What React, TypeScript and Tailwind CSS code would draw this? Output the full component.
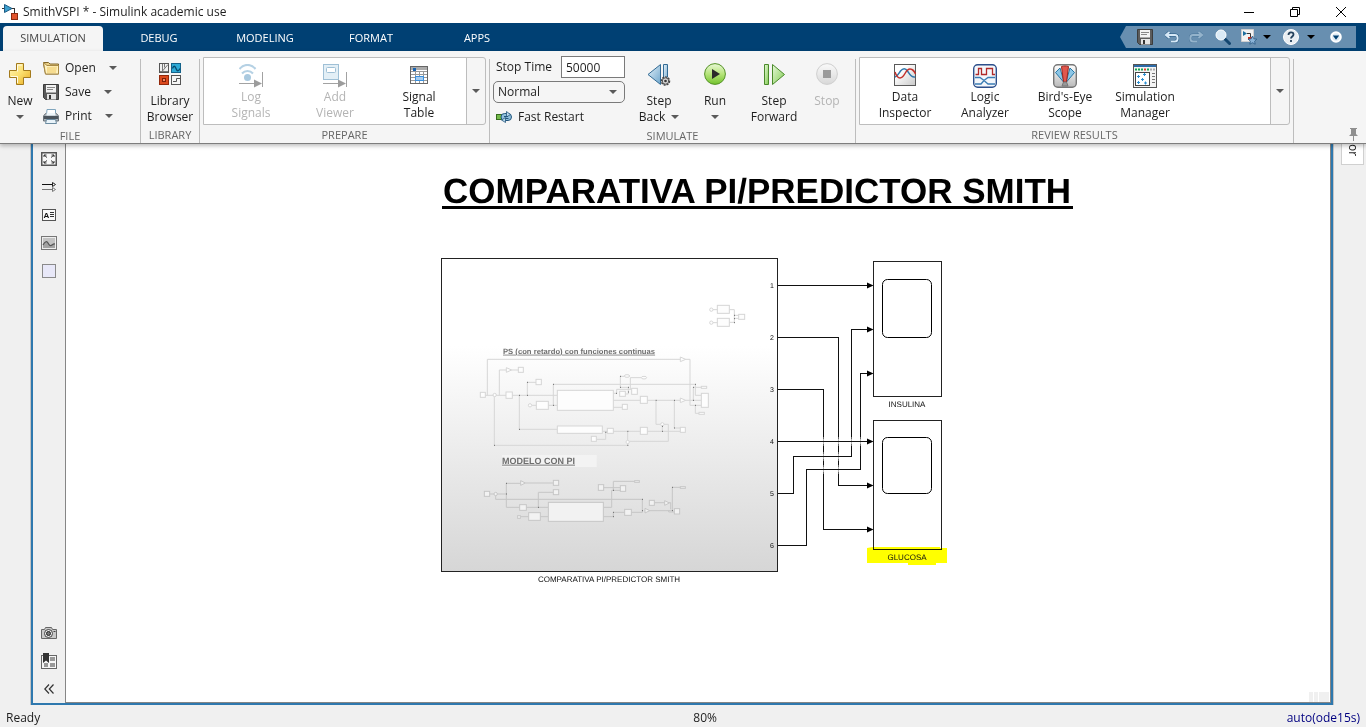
import React from "react";

type IconProps = { className?: string };

function Caret({ className = "" }: IconProps) {
  return (
    <svg width="8" height="4" viewBox="0 0 8 4" className={`shrink-0 ${className}`}>
      <path d="M0 0h8L4 4z" fill="#5a5a5a" />
    </svg>
  );
}

function AppIcon() {
  return (
    <svg width="16" height="16" viewBox="0 0 16 16">
      <path d="M0 4.500h3M9 4.500h3.500v4" fill="none" stroke="#333" />
      <path d="M2.500.500l7.500 4-7.500 4z" fill="#3c9fce" stroke="#1c5b84" />
      <path d="M12.500 4v5" stroke="#333" />
      <rect x="9.500" y="9.500" width="6" height="6" fill="#e2542c" stroke="#8a2a10" />
    </svg>
  );
}

function NewIcon() {
  return (
    <svg width="22" height="22" viewBox="0 0 22 22">
      <defs>
        <linearGradient id="plus" x1="0" y1="0" x2="1" y2="1">
          <stop offset="0" stopColor="#fff6bf" />
          <stop offset=".5" stopColor="#fbdf6d" />
          <stop offset="1" stopColor="#e6a81f" />
        </linearGradient>
      </defs>
      <path d="M7.500.500h7v7h7v7h-7v7h-7v-7h-7v-7h7z" fill="url(#plus)" stroke="#a37a1c" strokeLinejoin="round" />
      <path d="M8.500 20V13.500H2M8.500 8.500V2h4.500" fill="none" stroke="#fffbe4" />
    </svg>
  );
}

function OpenIcon() {
  return (
    <svg width="16" height="14" viewBox="0 0 16 14">
      <path d="M.5 1.500h5l1.500 1.500h8.500v10H2.500L.5 3z" fill="#e9cf86" stroke="#82672a" />
      <path d="M.5 1.500L4 4.500h11.500v8.500H2.500z" fill="#fff2c0" stroke="#a98a45" />
      <path d="M4 6l10-.5-1 6.500H4z" fill="#f6dc90" />
    </svg>
  );
}

function SaveIcon() {
  return (
    <svg width="16" height="16" viewBox="0 0 16 16">
      <path d="M.5.5h15v15h-13l-2-2z" fill="#5b5b5b" stroke="#3b3b3b" />
      <path d="M3 1h10v7H3z" fill="#f2f2f2" />
      <path d="M4 3.500h8M4 5.500h6" stroke="#888" />
      <path d="M4 10h9v5.500H4z" fill="#e4e4e4" />
      <path d="M6 11h2v4H6z" fill="#333" />
      <path d="M3 8.500h10" stroke="#aaa" />
    </svg>
  );
}

function PrintIcon() {
  return (
    <svg width="16" height="15" viewBox="0 0 16 15">
      <path d="M4 .5h8.500V6h-9z" fill="#fff" stroke="#7fa5bd" />
      <path d="M2.500 4.500h11l2 2.500v5H.5V7z" fill="#a9b2ba" stroke="#6a7278" />
      <path d="M1 7h14v3H1z" fill="#4b545c" />
      <path d="M3.500 4h9v2.500h-9z" fill="#eef6fa" />
      <path d="M3.500 10.500h9l1 4h-11z" fill="#e9f3f9" stroke="#6b8ba0" />
    </svg>
  );
}

function LibraryIcon() {
  return (
    <svg width="22" height="22" viewBox="0 0 22 22">
      <rect x=".5" y=".5" width="9" height="9" fill="#efefef" stroke="#555" />
      <path d="M3.500 1v7L9 1.500M5.500 1v3.500M1 8.500h8" fill="none" stroke="#777" />
      <rect x="12.500" y=".5" width="9" height="9" fill="#2eaad6" stroke="#14628a" />
      <path d="M13.500 5.500c1-3 2.500-3 3.500 0s2.500 3 4 0" fill="none" stroke="#07496c" strokeWidth="1.300" />
      <rect x=".5" y="12.500" width="9" height="9" fill="#dc4a1e" stroke="#93290c" />
      <rect x="3.500" y="15.500" width="3" height="3" fill="#f58a62" stroke="#7d200a" />
      <rect x="12.500" y="12.500" width="9" height="9" fill="#f5f5f5" stroke="#555" />
      <path d="M14 18.500h3.500v-3H21" fill="none" stroke="#555" />
    </svg>
  );
}

function LogSignalsIcon() {
  return (
    <svg width="24" height="24" viewBox="0 0 24 24">
      <path d="M0 19.500h17M23.500 8v15" stroke="#a2a2a2" />
      <path d="M15 15.500l8 4-8 4z" fill="#9c9c9c" />
      <circle cx="8.500" cy="13.500" r="3.500" fill="#a9c9df" />
      <path d="M3 9.500c3-3.500 8-3.500 11 0M.5 5C5-.5 12-.5 16.500 5" fill="none" stroke="#b5d1e4" strokeWidth="2" />
    </svg>
  );
}

function AddViewerIcon() {
  return (
    <svg width="24" height="24" viewBox="0 0 24 24">
      <path d="M0 19.500h17M23.500 8v15" stroke="#a2a2a2" />
      <path d="M15 15.500l8 4-8 4z" fill="#9c9c9c" />
      <rect x=".5" y=".5" width="15" height="15" fill="#e3eff6" stroke="#9fc0d6" />
      <rect x="3.500" y="3.500" width="9" height="5" rx="1" fill="#fff" stroke="#9fc0d6" />
    </svg>
  );
}

function SignalTableIcon() {
  return (
    <svg width="18" height="18" viewBox="0 0 18 18">
      <rect x=".5" y=".5" width="17" height="17" fill="#fff" stroke="#666" />
      <path d="M1 1h16v3H1z" fill="#ababab" />
      <path d="M3 2h3v3H3z" fill="#1764b4" />
      <path d="M1 5.500h16M1 8.500h16M1 11.500h16M1 14.500h16M5.500 5v12M13.500 5v12M9.500 5v12" stroke="#999" />
      <rect x="5.500" y="10.500" width="8" height="4" fill="#a7cdf0" stroke="#3b90dd" />
    </svg>
  );
}

function FastRestartIcon() {
  return (
    <svg width="16" height="12" viewBox="0 0 16 12">
      <rect x=".5" y="3.500" width="5" height="5" fill="#74bb4a" stroke="#356c1d" />
      <rect x="5" y="2.500" width="10.500" height="7" rx="3.500" fill="#8fbfdd" stroke="#24567c" />
      <path d="M10.500.500l4 3-4 2.500zM9.500 6.500v5l-4-2.500z" fill="#b9d9ec" stroke="#24567c" strokeWidth=".8" />
      <path d="M8 5.500h4M9.500 7.500h3" stroke="#24567c" />
    </svg>
  );
}

function StepBackIcon() {
  return (
    <svg width="24" height="24" viewBox="0 0 24 24">
      <defs>
        <linearGradient id="stepBack" x1="0" y1="0" x2="1" y2="1">
          <stop offset="0" stopColor="#e6f2fa" />
          <stop offset="1" stopColor="#6ea6cc" />
        </linearGradient>
      </defs>
      <path d="M13.500 1.500v20L1 11.500z" fill="url(#stepBack)" stroke="#336b94" />
      <path d="M16.500 1.500h4v20h-4z" fill="url(#stepBack)" stroke="#336b94" />
      <circle cx="18.500" cy="18" r="4" fill="#ddd" stroke="#444" strokeWidth="1.500" strokeDasharray="2 1" />
      <circle cx="18.500" cy="18" r="3.200" fill="#d8d8d8" stroke="#555" />
      <circle cx="18.500" cy="18" r="1.300" fill="#333" />
    </svg>
  );
}

function RunIcon() {
  return (
    <svg width="22" height="22" viewBox="0 0 22 22">
      <defs>
        <linearGradient id="run" x1="0" y1="0" x2="0" y2="1">
          <stop offset="0" stopColor="#e9f8d6" />
          <stop offset=".5" stopColor="#b6e47a" />
          <stop offset="1" stopColor="#72c32c" />
        </linearGradient>
      </defs>
      <circle cx="11" cy="11" r="10.400" fill="url(#run)" stroke="#559327" />
      <path d="M8 6v10l8-5z" fill="#2a2a2a" />
    </svg>
  );
}

function StepForwardIcon() {
  return (
    <svg width="22" height="22" viewBox="0 0 22 22">
      <defs>
        <linearGradient id="stepForward" x1="0" y1="0" x2="1" y2="1">
          <stop offset="0" stopColor="#e5f7d8" />
          <stop offset="1" stopColor="#83cc52" />
        </linearGradient>
      </defs>
      <path d="M1.500 1.500h4v20h-4z" fill="url(#stepForward)" stroke="#4a8a2a" />
      <path d="M9.500 1.500v20l12-10z" fill="url(#stepForward)" stroke="#4a8a2a" />
    </svg>
  );
}

function StopIcon() {
  return (
    <svg width="22" height="22" viewBox="0 0 22 22">
      <defs>
        <linearGradient id="stop" x1="0" y1="0" x2="0" y2="1">
          <stop offset="0" stopColor="#fafafa" />
          <stop offset="1" stopColor="#d8d8d8" />
        </linearGradient>
      </defs>
      <circle cx="11" cy="11" r="10.400" fill="url(#stop)" stroke="#cfcfcf" />
      <path d="M7 7h8v8H7z" fill="#9b9b9b" />
    </svg>
  );
}

function DataInspectorIcon() {
  return (
    <svg width="22" height="22" viewBox="0 0 22 22">
      <defs>
        <linearGradient id="inspector" x1="0" y1="0" x2="1" y2="1">
          <stop offset=".3" stopColor="#fff" />
          <stop offset="1" stopColor="#c9c9c9" />
        </linearGradient>
      </defs>
      <rect x=".5" y=".5" width="21" height="21" fill="url(#inspector)" stroke="#5a5a5a" />
      <path d="M1 13c3-1 4-4 5.500-6 2.500-3 5-3 7 0 2 3 4 7 7.500 6" fill="none" stroke="#2f77ad" strokeWidth="1.500" />
      <path d="M1 8c1 3 2 6 5 6 5 0 5-9 10-9 3 0 4 2 5.500 5" fill="none" stroke="#c4302b" strokeWidth="1.500" />
    </svg>
  );
}

function LogicAnalyzerIcon() {
  return (
    <svg width="24" height="24" viewBox="0 0 24 24">
      <rect x=".7" y=".7" width="22.600" height="22.600" rx="4" fill="#f4f7fb" stroke="#2c4f8b" strokeWidth="1.400" />
      <path d="M2.500 10.500h3v-6h3v6h5v-6h6v6h2.500" fill="none" stroke="#b02a2a" strokeWidth="1.300" />
      <path d="M2 13.500h5l4 3 4 3.500h7M2 20h6l3-3.500 4-3h7" fill="none" stroke="#3a7cb4" strokeWidth="1.300" />
    </svg>
  );
}

function BirdsEyeIcon() {
  return (
    <svg width="24" height="24" viewBox="0 0 24 24">
      <defs>
        <linearGradient id="birdsEye" x1="0" y1="0" x2="0" y2="1">
          <stop offset="0" stopColor="#fff" />
          <stop offset="1" stopColor="#b9b9b9" />
        </linearGradient>
      </defs>
      <rect x=".7" y=".7" width="22.600" height="22.600" rx="4" fill="url(#birdsEye)" stroke="#777" strokeWidth="1.400" />
      <path d="M10.500 18L2.500 8.500 7 4M13.500 18l8-9.500L17 4" fill="#8cc6e6" stroke="#2878a5" />
      <path d="M7 4l4 14M17 4l-4 14" stroke="#2878a5" />
      <path d="M8.500 2.500c2-.7 5-.7 7 0L13.500 18h-3z" fill="#e0574d" stroke="#9c241d" />
      <path d="M9 22l1.500-4h3l1.500 4z" fill="#9a9a9a" stroke="#777" />
    </svg>
  );
}

function SimManagerIcon() {
  return (
    <svg width="24" height="24" viewBox="0 0 24 24">
      <rect x=".5" y=".5" width="23" height="23" fill="#f4f4f4" stroke="#555" />
      <path d="M1 1h22v2H1z" fill="#2d6ba8" />
      <path d="M2 4.500h2v2H2zM5 4.500h2v2H5zM8 4.500h2v2H8zM14 4.500h2v2h-2z" fill="#14a44d" />
      <path d="M11 4.500h2v2h-2z" fill="#e23b2f" />
      <path d="M17 4.500h2v2h-2zM20 4.500h2v2h-2z" fill="#aaa" />
      <rect x="2.500" y="8.500" width="14" height="13" fill="#fff" stroke="#444" />
      <path d="M4 12.500h3M5.500 11v3M10 10.500h3M11.500 9v3M8 15.500h3M9.500 14v3M4 18.500h3M5.500 17v3M11 19h3M12.500 17.500v3" stroke="#2c8fd1" />
      <path d="M19 9.500h3M19 12.500h3M19 15.500h3M19 18.500h3" stroke="#777" />
    </svg>
  );
}

function PinIcon() {
  return (
    <svg width="9" height="13" viewBox="0 0 9 13">
      <path d="M1 0h7v1H7v5l2 2H0l2-2V1H1zM4 8h1v5H4z" fill="#8f8f8f" />
    </svg>
  );
}

function UndoIcon({ className = "" }: IconProps) {
  return (
    <svg width="14" height="12" viewBox="0 0 14 12" className={className}>
      <path d="M4.500 1L1 4l3.500 3M1.500 4H10c3.500 0 3.500 6.500 0 6.500H6" fill="none" stroke="#22567f" strokeWidth="3" />
      <path d="M4.500 1L1 4l3.500 3M1.500 4H10c3.500 0 3.500 6.500 0 6.500H6" fill="none" stroke="#d6e8f6" strokeWidth="2" />
    </svg>
  );
}

function SearchIcon() {
  return (
    <svg width="16" height="16" viewBox="0 0 16 16">
      <path d="M9.500 9.500l5 5" stroke="#14466f" strokeWidth="3" strokeLinecap="round" />
      <circle cx="6" cy="6" r="5" fill="#dbeaf5" stroke="#fff" />
    </svg>
  );
}

function FavoriteIcon() {
  return (
    <svg width="16" height="16" viewBox="0 0 16 16">
      <path d="M.5.5h12v12H.5z" fill="#f3f3f3" stroke="#cfcfcf" />
      <path d="M2 2l4 2.500L2 7z" fill="#1d6f9f" />
      <path d="M6 4.500h3.500V8" fill="none" stroke="#333" />
      <path d="M7 8h4v3H7z" fill="#cf2f1c" />
      <path d="M11.500 7l1.300 2.800 3 .4-2.200 2 .6 3-2.700-1.500-2.700 1.500.6-3-2.200-2 3-.4z" fill="#8ab4d8" stroke="#2d5c85" strokeWidth=".8" />
    </svg>
  );
}

function HelpIcon() {
  return (
    <svg width="16" height="16" viewBox="0 0 16 16">
      <circle cx="8" cy="8" r="7.500" fill="#e9eef2" stroke="#fff" />
      <path d="M5.500 6c0-3.500 5-3.500 5-.500 0 2-2.500 2-2.500 4M8 11v2" fill="none" stroke="#24415c" strokeWidth="1.800" />
    </svg>
  );
}

function MoreIcon() {
  return (
    <svg width="12" height="12" viewBox="0 0 12 12">
      <circle cx="6" cy="6" r="4.800" fill="#dfeaf3" stroke="#fff" strokeWidth="2" />
      <path d="M2.800 4.500h6.400L6 8.800z" fill="#004073" />
    </svg>
  );
}

type PaletteItem = { name: string; icon: React.ReactNode };

const paletteTop: PaletteItem[] = [
  {
    name: "Fit to view",
    icon: (
      <svg width="16" height="14" viewBox="0 0 16 14">
        <rect x=".75" y=".75" width="14.500" height="12.500" fill="#f7f7f7" stroke="#555" strokeWidth="1.500" />
        <path d="M3 5V3h2.500M10.500 3H13v2M13 9v2h-2.500M5.500 11H3V9M3 3l3 2.500M13 3l-3 2.500M13 11l-3-2.500M3 11l3-2.500" fill="none" stroke="#333" />
      </svg>
    ),
  },
  {
    name: "Sample time display",
    icon: (
      <svg width="14" height="10" viewBox="0 0 14 10">
        <path d="M0 2.500h11" stroke="#111" />
        <path d="M0 7.500h11" stroke="#777" />
        <path d="M10.500.500l3 2-3 2z" fill="#fff" stroke="#222" />
        <path d="M10.500 5.500l3 2-3 2z" fill="#fff" stroke="#777" />
      </svg>
    ),
  },
  {
    name: "Annotation",
    icon: (
      <svg width="14" height="12" viewBox="0 0 14 12">
        <rect x=".5" y=".5" width="13" height="11" fill="#fafafa" stroke="#555" />
        <text x="1.500" y="9" fontSize="8" fontWeight="700" fontFamily="Liberation Sans, sans-serif" fill="#111">A</text>
        <path d="M8 3.500h4M8 5.500h4M8 7.500h4" stroke="#333" />
      </svg>
    ),
  },
  {
    name: "Image",
    icon: (
      <svg width="16" height="14" viewBox="0 0 16 14">
        <rect x=".5" y=".5" width="15" height="13" fill="#eee" stroke="#777" />
        <rect x="2" y="2" width="12" height="10" fill="#c3c3c3" />
        <path d="M2 9c2-4 4-4 5-2s2 4 4 2 2-1 3-1v4H2z" fill="#a3a3a3" />
        <path d="M2 9c2-4 4-4 5-2s2 3.500 4 2 2-1 3-1" fill="none" stroke="#555" strokeWidth="1.200" />
      </svg>
    ),
  },
  {
    name: "Area",
    icon: (
      <svg width="14" height="14" viewBox="0 0 14 14">
        <rect x=".5" y=".5" width="13" height="13" fill="#e8e8f8" stroke="#8a8a8a" />
      </svg>
    ),
  },
];

const paletteBottom: PaletteItem[] = [
  {
    name: "Screenshot",
    icon: (
      <svg width="16" height="12" viewBox="0 0 16 12">
        <path d="M.5 2.500h3l1-2h6l1 2h4v9H.5z" fill="#c9c9c9" stroke="#666" />
        <circle cx="7.500" cy="6.500" r="4" fill="#eee" stroke="#444" />
        <circle cx="7.500" cy="6.500" r="2" fill="#777" stroke="#222" />
        <path d="M12.500 4.500h2" stroke="#444" />
      </svg>
    ),
  },
  {
    name: "Model browser",
    icon: (
      <svg width="16" height="16" viewBox="0 0 16 16">
        <rect x=".5" y="2.500" width="15" height="13" fill="#f7f7f7" stroke="#666" />
        <path d="M9 4h5v4H9zM9 10h5v4H9zM3 10h4v4H3z" fill="#999" />
        <path d="M2 0h6v10L5 7.500 2 10z" fill="#333" />
      </svg>
    ),
  },
  {
    name: "Collapse palette",
    icon: (
      <svg width="10" height="10" viewBox="0 0 10 10">
        <path d="M5 .5L.8 5 5 9.500M9.500.5L5.300 5l4.200 4.500" fill="none" stroke="#333" strokeWidth="1.200" />
      </svg>
    ),
  },
];

function Palette({ items }: { items: PaletteItem[] }) {
  return (
    <div className="flex flex-col">
      {items.map((item) => (
        <button key={item.name} aria-label={item.name} className="flex h-7 w-8 items-center justify-center">
          {item.icon}
        </button>
      ))}
    </div>
  );
}

function Section({ label, className, children }: { label: string; className: string; children: React.ReactNode }) {
  return (
    <section className={`flex shrink-0 flex-col ${className}`}>
      <div className="flex h-[77px]">{children}</div>
      <h2 className="h-4 text-center text-[11px] leading-4 text-[#666]">{label}</h2>
    </section>
  );
}

function Separator() {
  return <div className="mt-2 w-px shrink-0 bg-[#bdbdbd]" />;
}

function FileRow({ icon, label, gap }: { icon: React.ReactNode; label: string; gap: string }) {
  return (
    <button className="flex h-6 items-center">
      <span className="flex w-[22px]">{icon}</span>
      <span className={gap}>{label}</span>
      <Caret />
    </button>
  );
}

type Tool = { icon: React.ReactNode; lines: string[]; disabled?: boolean };

function Gallery({ tools, item, label, className }: { tools: Tool[]; item: string; label: string; className: string }) {
  return (
    <div className={`mt-1.5 flex h-[68px] rounded-r-[3px] border border-[#bdbdbd] ${className}`}>
      <div className="flex flex-1 bg-white pl-[5px]">
        {tools.map((t) => (
          <button
            key={t.lines.join(" ")}
            disabled={t.disabled}
            className={`flex flex-col items-center pt-1.5 leading-4 ${item} ${t.disabled ? "text-[#b4b4b4]" : ""}`}
          >
            <span className="flex h-[25px] items-start">{t.icon}</span>
            {t.lines.map((l) => (
              <span key={l}>{l}</span>
            ))}
          </button>
        ))}
      </div>
      <button aria-label={label} className="flex w-[19px] items-center justify-center border-l border-[#bdbdbd]">
        <Caret />
      </button>
    </div>
  );
}

function BigButton({ icon, first, second, className, disabled }: { icon: React.ReactNode; first: string; second?: React.ReactNode; className: string; disabled?: boolean }) {
  return (
    <button disabled={disabled} className={`flex shrink-0 flex-col items-center pt-3 leading-4 ${disabled ? "text-[#b4b4b4]" : ""} ${className}`}>
      <span className="flex h-[30px] items-start">{icon}</span>
      <span>{first}</span>
      <span className="flex h-4 items-center gap-1.5">{second}</span>
    </button>
  );
}

const prepareTools: Tool[] = [
  { icon: <LogSignalsIcon />, lines: ["Log", "Signals"], disabled: true },
  { icon: <AddViewerIcon />, lines: ["Add", "Viewer"], disabled: true },
  { icon: <span className="pt-0.5"><SignalTableIcon /></span>, lines: ["Signal", "Table"] },
];

const reviewTools: Tool[] = [
  { icon: <DataInspectorIcon />, lines: ["Data", "Inspector"] },
  { icon: <LogicAnalyzerIcon />, lines: ["Logic", "Analyzer"] },
  { icon: <BirdsEyeIcon />, lines: ["Bird's-Eye", "Scope"] },
  { icon: <SimManagerIcon />, lines: ["Simulation", "Manager"] },
];

function Toolstrip() {
  return (
    <div className="relative z-10 flex h-[93px] shrink-0 border-b border-[#7d7d7d] bg-[#f5f5f5] shadow-[0_2px_4px_rgba(0,0,0,0.25)]">
      <Section label="FILE" className="w-[140px]">
        <BigButton icon={<NewIcon />} first="New" second={<Caret />} className="w-10" />
        <div className="flex flex-col pt-[5px] pl-[3px]">
          <FileRow icon={<OpenIcon />} label="Open" gap="w-11 text-left" />
          <FileRow icon={<SaveIcon />} label="Save" gap="w-[39px] text-left" />
          <FileRow icon={<PrintIcon />} label="Print" gap="w-10 text-left" />
        </div>
      </Section>
      <Separator />
      <Section label="LIBRARY" className="w-[58px]">
        <BigButton icon={<LibraryIcon />} first="Library" second="Browser" className="w-full" />
      </Section>
      <Separator />
      <Section label="PREPARE" className="w-[289px]">
        <Gallery tools={prepareTools} item="w-[84px]" label="More prepare tools" className="ml-[3px] w-[283px]" />
      </Section>
      <Separator />
      <Section label="SIMULATE" className="w-[365px]">
        <div className="flex w-[135px] shrink-0 flex-col pt-[5px] pl-[3px]">
          <div className="flex items-center">
            <label htmlFor="stop-time" className="ml-[3px] w-[65px] whitespace-nowrap">Stop Time</label>
            <input id="stop-time" defaultValue="50000" className="h-[22px] w-16 border border-[#7a7a7a] bg-white px-1" />
          </div>
          <div className="relative mt-[3px] flex items-center">
            <select aria-label="Simulation mode" defaultValue="Normal" className="h-[22px] w-[132px] appearance-none rounded-[5px] border border-[#7a7a7a] bg-[#f5f5f5] pl-1">
              <option>Normal</option>
              <option>Accelerator</option>
            </select>
            <Caret className="pointer-events-none absolute right-2" />
          </div>
          <button className="mt-[3px] flex h-[22px] items-center gap-1.5 pl-[3px] whitespace-nowrap">
            <FastRestartIcon />
            Fast Restart
          </button>
        </div>
        <BigButton icon={<StepBackIcon />} first="Step" second={<>Back<Caret /></>} className="ml-1 w-[60px]" />
        <BigButton icon={<RunIcon />} first="Run" second={<Caret />} className="w-[52px]" />
        <BigButton icon={<StepForwardIcon />} first="Step" second="Forward" className="w-[66px]" />
        <BigButton icon={<StopIcon />} first="Stop" className="w-10" disabled />
      </Section>
      <Separator />
      <Section label="REVIEW RESULTS" className="w-[437px]">
        <Gallery tools={reviewTools} item="w-20" label="More result tools" className="ml-[3px] w-[431px]" />
      </Section>
      <Separator />
      <button aria-label="Pin toolstrip" className="mt-auto mr-2 mb-0.5 ml-auto">
        <PinIcon />
      </button>
    </div>
  );
}

function TitleBar() {
  return (
    <header className="flex h-[23px] shrink-0 items-center bg-white pr-0.5">
      <span className="mr-[5px] ml-0.5 flex">
        <AppIcon />
      </span>
      <h1 className="flex-1">SmithVSPI * - Simulink academic use</h1>
      <button aria-label="Minimize" className="flex w-[46px] justify-center">
        <svg width="10" height="10" viewBox="0 0 10 10"><path d="M0 5.500h10" stroke="#000" /></svg>
      </button>
      <button aria-label="Restore" className="flex w-[46px] justify-center">
        <svg width="10" height="10" viewBox="0 0 10 10"><path d="M.5 2.500h7v7h-7zM2.500 2V.500h7v7H8" fill="none" stroke="#000" /></svg>
      </button>
      <button aria-label="Close" className="flex w-[46px] justify-center">
        <svg width="10" height="10" viewBox="0 0 10 10"><path d="M0 0l10 10M10 0L0 10" stroke="#000" /></svg>
      </button>
    </header>
  );
}

function BlackCaret() {
  return <svg width="8" height="4" viewBox="0 0 8 4"><path d="M0 0h8L4 4z" fill="#000" /></svg>;
}

function TabBar() {
  return (
    <div className="flex h-7 shrink-0 bg-[#004073] text-[11px] text-white">
      <nav className="flex flex-1 pt-[3px] pl-[3px]">
        <button className="mr-[3px] w-[100px] rounded-t-sm bg-[#f5f5f5] text-[#444]">SIMULATION</button>
        {["DEBUG", "MODELING", "FORMAT", "APPS"].map((t) => (
          <button key={t} className="w-[106px]">{t}</button>
        ))}
      </nav>
      <div className="mt-[3px] mr-2.5 flex h-[22px] w-[236px] items-center bg-[#688fb0] pl-[17px] [clip-path:polygon(6px_0,100%_0,100%_100%,6px_100%,0_50%)]">
        <button aria-label="Save"><SaveIcon /></button>
        <button aria-label="Undo" className="ml-3"><UndoIcon /></button>
        <button aria-label="Redo" className="ml-2.5"><UndoIcon className="-scale-x-100 opacity-40" /></button>
        <button aria-label="Search" className="ml-3"><SearchIcon /></button>
        <button aria-label="Favorites" className="ml-2.5 flex items-center gap-1.5"><FavoriteIcon /><BlackCaret /></button>
        <button aria-label="Help" className="ml-3 flex items-center gap-2"><HelpIcon /><BlackCaret /></button>
        <button aria-label="More" className="ml-[15px]"><MoreIcon /></button>
      </div>
    </div>
  );
}

/* Miniature contents of the subsystem, drawn on a grid of a third of a pixel. */
function SubsystemPreview() {
  const box = (x: number, y: number, w: number, h: number) => (
    <rect key={`${x}-${y}`} x={x} y={y} width={w} height={h} />
  );
  return (
    <g>
      <g transform="translate(470 290) scale(0.333333)" strokeWidth="3" stroke="#d6d6d6" fill="none">
        <path d="M52 316V208H630M646 208H660V346H694M88 316V240H108M124 240H145M46 316H262M172 316V277H198M148 316V418H262M73 316V466H473V424M186 346H199M235 346H262M250 346V283H676V316H694M430 310H440V298H485M451 292V259H462M451 292H475V312H466M481 298V263H514M430 331H630M646 331H694M430 352H457M398 424H630M407 424V448H380M558 331V403H595V454H478M577 403V424M613 331V414H630M670 331V292H694M676 346V370H687M729 59H742M778 59H793V97H778M793 76H806M729 98H742M793 85H806" />
        <g fill="#fdfdfd">
          {[
            [742, 46, 36, 24], [742, 85, 36, 24], [806, 73, 18, 15], [145, 232, 15, 15], [198, 268, 16, 16], [31, 307, 15, 15],
            [108, 306, 19, 19], [199, 334, 36, 24], [262, 301, 168, 60], [449, 304, 17, 15], [485, 295, 17, 18], [457, 343, 15, 15],
            [511, 319, 21, 21], [694, 310, 21, 42], [262, 408, 135, 22], [412, 415, 18, 15], [364, 439, 15, 15], [511, 412, 21, 21],
            [631, 412, 15, 15], [694, 289, 16, 6], [687, 367, 16, 6],
          ].map(([x, y, w, h]) => box(x, y, w, h))}
          <path d="M109 233l16 7-16 7zM631 201l16 7-16 7zM631 324l16 7-16 7z" />
          <circle cx="74" cy="315" r="5" /><circle cx="180" cy="346" r="5" /><circle cx="577" cy="403" r="5" /><circle cx="473" cy="456" r="5" />
          <circle cx="724" cy="59" r="5" /><circle cx="724" cy="98" r="5" />
          <ellipse cx="471" cy="258" rx="8" ry="4" /><ellipse cx="522" cy="263" rx="8" ry="4" />
        </g>
        <path
          d="M171 277h3M171 316h3M147 316h3M147 418h3M249 346h3M249 283h3M450 259h3M450 292h3M474 292h3M474 306h3M557 331h3M612 331h3M612 414h3M669 331h3M669 292h3M675 283h3M675 346h3M472 424h3M472 466h3M576 424h3M576 409h3M406 427h3M792 76h3M792 86h3M792 98h3M72 466h3M438 310h3"
          stroke="#666"
        />
        <text x="99" y="192" fontSize="23" fontWeight="700" fill="#6e6e6e" stroke="none" textDecoration="underline">
          PS (con retardo) con funciones continuas
        </text>
      </g>
      <g transform="translate(470 440) scale(0.333333)" strokeWidth="3" stroke="#c6c6c6" fill="none">
        <rect x="96" y="45" width="284" height="36" fill="#f3f3f3" stroke="none" />
        <path d="M59 162H109M109 202V130H152M166 129H250M109 202H235M205 202V157H250M77 162V178H517V217M152 230H235M400 202H425V151H451M400 143H451M400 230H430V217H517M430 151V124H494M524 212H607V142H631M554 188H584M596 188H602V208M596 212V216H613" />
        <g fill="#f2f2f2">
          {[
            [43, 154, 16, 15], [250, 121, 16, 15], [250, 149, 16, 15], [149, 194, 20, 17], [176, 218, 35, 23], [235, 187, 165, 57],
            [385, 134, 16, 17], [451, 137, 16, 17], [464, 208, 20, 18], [538, 181, 15, 15], [613, 206, 16, 16], [143, 227, 8, 8],
            [494, 122, 14, 5], [631, 140, 15, 5],
          ].map(([x, y, w, h]) => box(x, y, w, h))}
          <path d="M152 122l14 7-14 7zM525 205l14 7-14 7zM584 182l14 7-14 7z" />
          <circle cx="77" cy="162" r="5" />
        </g>
        <path d="M108 130h3M108 162h3M204 202h3M516 178h3M516 212h3M429 217h3M429 230h3M429 151h3M606 142h3M606 212h3" stroke="#666" />
        <text x="96" y="72" fontSize="27" fontWeight="700" fill="#6e6e6e" stroke="none" textDecoration="underline">
          MODELO CON PI
        </text>
      </g>
    </g>
  );
}

/* Points where a vertical wire passes under a horizontal one. */
const crossings = [
  [823, 441], [838, 441], [851, 441], [860, 441],
  [823, 456], [838, 456], [823, 469], [838, 469],
];

function Diagram() {
  return (
    <svg width="1264" height="558" viewBox="66 144 1264 558" textRendering="geometricPrecision" className="absolute top-0 left-0" fontFamily="Liberation Sans, Arial, sans-serif">
      <defs>
        <linearGradient id="subsystem" x1="0" y1="0" x2="0" y2="1">
          <stop offset=".28" stopColor="#fff" />
          <stop offset="1" stopColor="#d6d6d6" />
        </linearGradient>
      </defs>
      <text x="443" y="203" fontSize="35" fontWeight="700">COMPARATIVA PI/PREDICTOR SMITH</text>
      <path d="M442 207.500h631" stroke="#000" strokeWidth="3" />

      <rect x="441.500" y="258.500" width="336" height="313" fill="url(#subsystem)" stroke="#222" />
      <SubsystemPreview />
      <g fontSize="8" textAnchor="middle" fill="#111">
        {[1, 2, 3, 4, 5, 6].map((n) => (
          <text key={n} x="772" y={236 + n * 52} fontSize="7">{n}</text>
        ))}
        <text x="609" y="582">COMPARATIVA PI/PREDICTOR SMITH</text>
      </g>

      <g fill="none" stroke="#111">
        <path d="M823.500 389v141M838.500 337v149M851.500 329v128M860.500 373v97M793.500 456v38M806.500 469v77" />
        {crossings.map(([x, y]) => (
          <g key={`${x}-${y}`} stroke="#fff">
            <path d={`M${x + 0.5} ${y - 4}v9`} strokeOpacity=".35" />
            <path d={`M${x + 0.5} ${y - 2}v5`} strokeOpacity=".5" />
          </g>
        ))}
        <path d="M778 285.500h90M778 337.500h60M778 389.500h45M778 441.500h90M778 493.500h15M778 545.500h28M794 456.500h57M807 469.500h53M852 329.500h16M861 373.500h7M839 485.500h29M824 529.500h44" />
      </g>
      {[285, 329, 373, 441, 485, 529].map((y) => (
        <path key={y} d={`M867 ${y - 2.5}l6.500 3-6.500 3z`} fill="#000" />
      ))}

      <g fill="#fff" stroke="#222">
        <rect x="873.500" y="261.500" width="68" height="135" />
        <rect x="873.500" y="420.500" width="68" height="129" />
        <g stroke="#000">
          <rect x="882.500" y="279.500" width="49" height="58" rx="5" />
          <rect x="882.500" y="437.500" width="49" height="56" rx="5" />
        </g>
      </g>
      <path d="M867 548l6-1h67v1h7v15h-11v2h-28v-2h-41z" fill="#ff0" className="mix-blend-multiply" />
      <g fontSize="8" textAnchor="middle" fill="#111">
        <text x="907" y="407">INSULINA</text>
        <text x="907" y="560">GLUCOSA</text>
      </g>
    </svg>
  );
}

export default function App() {
  return (
    <div className="flex h-screen flex-col overflow-hidden bg-[#f0f0f0] font-['Open_Sans',sans-serif] text-[12px] text-[#1e1e1e]">
      <TitleBar />
      <TabBar />
      <Toolstrip />
      <div className="flex min-h-0 flex-1">
        <div className="w-[31px] shrink-0 border-r border-[#c4c4c4]" />
        <main className="flex min-w-0 flex-1 border-x-2 border-b-2 border-[#2e78ae]">
          <aside className="flex w-8 shrink-0 flex-col justify-between pt-px">
            <Palette items={paletteTop} />
            <Palette items={paletteBottom} />
          </aside>
          <div className="relative flex-1 overflow-hidden border-x border-b border-[#868686] bg-white">
            <Diagram />
            <div className="absolute right-px bottom-0 flex gap-px">
              <div className="h-2.5 w-1 bg-[#f0f0f0]" />
              <div className="h-2.5 w-1 bg-[#f0f0f0]" />
              <div className="h-2.5 w-2.5 bg-[#f0f0f0]" />
            </div>
          </div>
        </main>
        <aside className="w-[33px] shrink-0 border-l border-[#c4c4c4] pl-[7px]">
          <button className="flex h-[21px] w-[23px] items-center justify-start border border-t-0 border-[#d0d0d0] bg-white [writing-mode:vertical-rl]">
            or
          </button>
        </aside>
      </div>
      <footer className="grid h-[22px] shrink-0 grid-cols-3 items-center px-1.5 pt-[3px]">
        <span>Ready</span>
        <span className="pl-[236px]">80%</span>
        <span className="text-right text-[#000080]">auto(ode15s)</span>
      </footer>
    </div>
  );
}
